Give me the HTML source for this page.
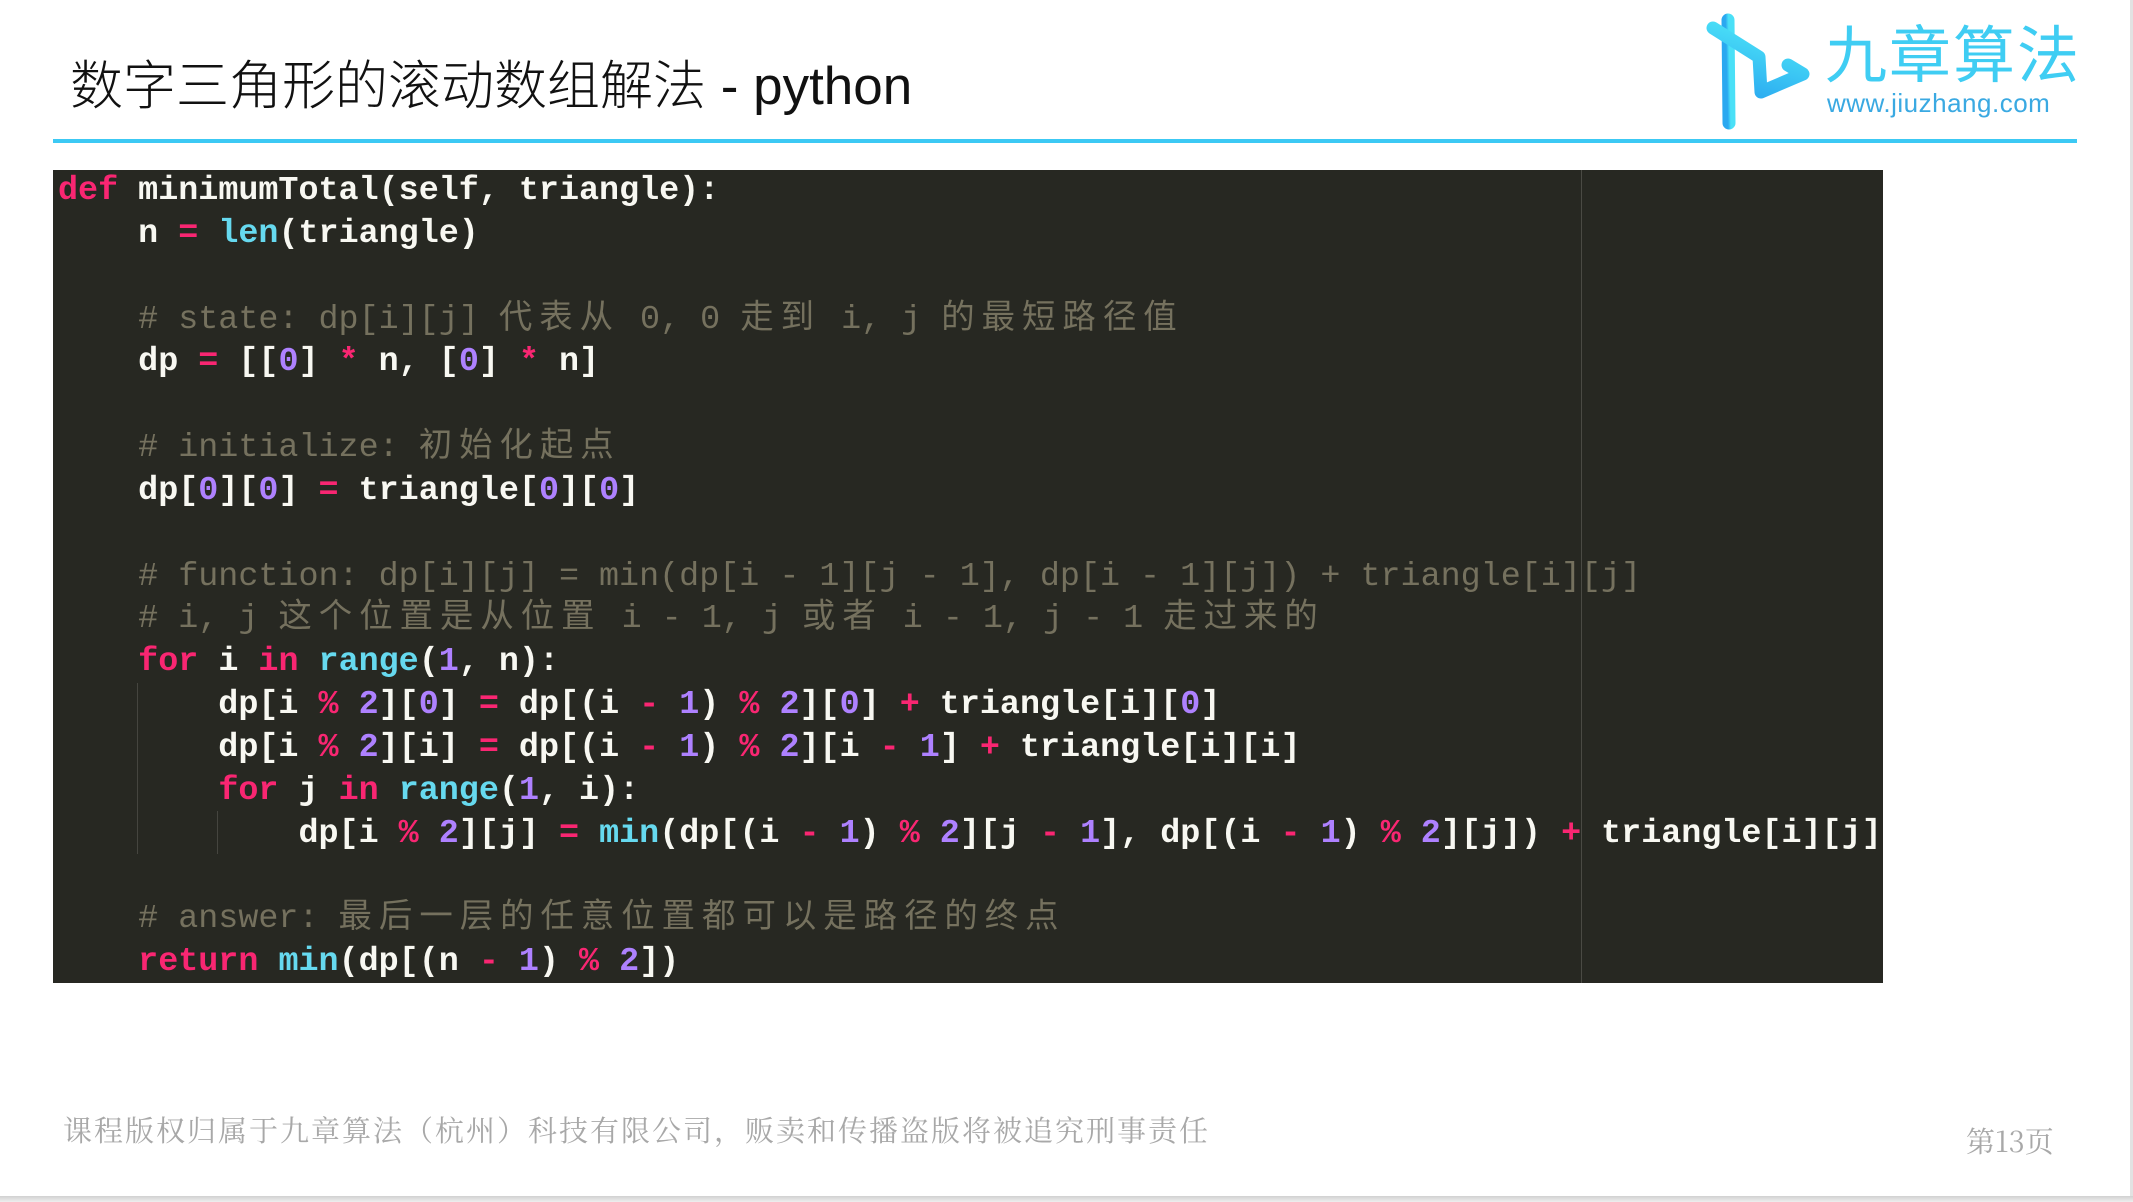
<!DOCTYPE html>
<html><head><meta charset="utf-8"><style>
*{margin:0;padding:0;box-sizing:border-box}
body{width:2133px;height:1202px;background:#fff;position:relative;overflow:hidden;font-family:"Liberation Sans","Noto Sans CJK SC",sans-serif}
.title{position:absolute;left:70px;top:52px;font-size:53px;line-height:70px;color:#111;font-family:"Liberation Sans","Noto Sans CJK SC",sans-serif;font-weight:300;white-space:nowrap}
.hr{position:absolute;left:53px;top:139px;width:2024px;height:4px;background:#3cc9f4}
.code{position:absolute;left:53px;top:170px;width:1830px;height:813px;background:#272822;overflow:hidden}
.vline{position:absolute;left:1528px;top:0;width:1px;height:813px;background:#4a4a44}
.guide{position:absolute;width:1px;background:#45453f}
pre{position:absolute;left:5px;top:0px;font-family:"Liberation Mono","Noto Sans CJK SC",monospace;font-size:33.4px;line-height:42.85px;color:#f8f8f2;white-space:pre;font-weight:bold}
.k{color:#f92672}.b{color:#66d9ef}.n{color:#ae81ff}.c{color:#75715e;font-weight:normal}.z{letter-spacing:7px}
.foot{position:absolute;left:63px;top:1109px;font-size:29px;color:#a8a8a8;font-family:"Noto Serif CJK SC",serif;white-space:nowrap;letter-spacing:2px}
.pg{position:absolute;left:1966px;top:1120px;font-size:29px;color:#a8a8a8;font-family:"Noto Serif CJK SC",serif}
.logo{position:absolute;left:1825px;top:14px;font-size:62px;line-height:72px;color:#3fcdf3;font-family:"Noto Sans CJK SC",sans-serif;letter-spacing:2px}
.url{position:absolute;left:1827px;top:88px;font-size:26px;color:#3aa9e2;font-family:"Liberation Sans",sans-serif;letter-spacing:.5px}
.rb{position:absolute;left:2130px;top:0;width:3px;height:1202px;background:#e2e2e2}
.bb{position:absolute;left:0;top:1196px;width:2133px;height:6px;background:linear-gradient(#d0d0d0,#eee)}
</style></head><body>
<div class="title">数字三角形的滚动数组解法 - python</div>
<svg style="position:absolute;left:0;top:0" width="2133" height="140">
<defs><linearGradient id="g" x1="0" y1="1" x2="0.4" y2="0"><stop offset="0" stop-color="#2aa8f0"/><stop offset="1" stop-color="#4ae0f7"/></linearGradient></defs>
<g fill="none" stroke="url(#g)" stroke-width="13" stroke-linecap="round" stroke-linejoin="round">
<path d="M1728 20 L1729 123"/>
<path d="M1713 28 L1759 57 L1761 92 L1803 74 L1788 65"/>
</g></svg>
<div class="logo">九章算法</div>
<div class="url">www.jiuzhang.com</div>
<div class="hr"></div>
<div class="code">
<div class="vline"></div>
<div class="guide" style="left:84px;top:513px;height:171px"></div>
<div class="guide" style="left:164px;top:641px;height:43px"></div>
<pre><span class="k">def</span> minimumTotal(self, triangle):
    n <span class="k">=</span> <span class="b">len</span>(triangle)

    <span class="c"># state: dp[i][j] <span class="z">代表从</span> 0, 0 <span class="z">走到</span> i, j <span class="z">的最短路径值</span></span>
    dp <span class="k">=</span> [[<span class="n">0</span>] <span class="k">*</span> n, [<span class="n">0</span>] <span class="k">*</span> n]

    <span class="c"># initialize: <span class="z">初始化起点</span></span>
    dp[<span class="n">0</span>][<span class="n">0</span>] <span class="k">=</span> triangle[<span class="n">0</span>][<span class="n">0</span>]

    <span class="c"># function: dp[i][j] = min(dp[i - 1][j - 1], dp[i - 1][j]) + triangle[i][j]</span>
    <span class="c"># i, j <span class="z">这个位置是从位置</span> i - 1, j <span class="z">或者</span> i - 1, j - 1 <span class="z">走过来的</span></span>
    <span class="k">for</span> i <span class="k">in</span> <span class="b">range</span>(<span class="n">1</span>, n):
        dp[i <span class="k">%</span> <span class="n">2</span>][<span class="n">0</span>] <span class="k">=</span> dp[(i <span class="k">-</span> <span class="n">1</span>) <span class="k">%</span> <span class="n">2</span>][<span class="n">0</span>] <span class="k">+</span> triangle[i][<span class="n">0</span>]
        dp[i <span class="k">%</span> <span class="n">2</span>][i] <span class="k">=</span> dp[(i <span class="k">-</span> <span class="n">1</span>) <span class="k">%</span> <span class="n">2</span>][i <span class="k">-</span> <span class="n">1</span>] <span class="k">+</span> triangle[i][i]
        <span class="k">for</span> j <span class="k">in</span> <span class="b">range</span>(<span class="n">1</span>, i):
            dp[i <span class="k">%</span> <span class="n">2</span>][j] <span class="k">=</span> <span class="b">min</span>(dp[(i <span class="k">-</span> <span class="n">1</span>) <span class="k">%</span> <span class="n">2</span>][j <span class="k">-</span> <span class="n">1</span>], dp[(i <span class="k">-</span> <span class="n">1</span>) <span class="k">%</span> <span class="n">2</span>][j]) <span class="k">+</span> triangle[i][j]

    <span class="c"># answer: <span class="z">最后一层的任意位置都可以是路径的终点</span></span>
    <span class="k">return</span> <span class="b">min</span>(dp[(n <span class="k">-</span> <span class="n">1</span>) <span class="k">%</span> <span class="n">2</span>])</pre>
</div>
<div class="foot">课程版权归属于九章算法（杭州）科技有限公司，贩卖和传播盗版将被追究刑事责任</div>
<div class="pg">第13页</div>
<div class="rb"></div>
<div class="bb"></div>
</body></html>
